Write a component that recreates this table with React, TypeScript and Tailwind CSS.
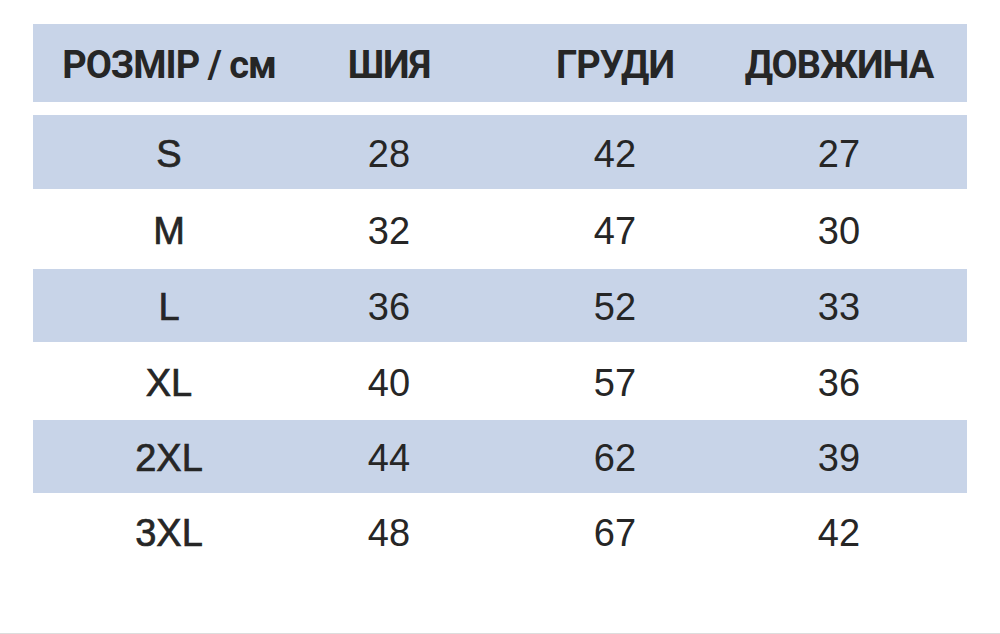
import React from 'react';

// Size chart: header + six size rows, every other row tinted
const rows = [
    { size: 'S', neck: 28, chest: 42, length: 27, h: 'h-[74px]', tint: true },
    { size: 'M', neck: 32, chest: 47, length: 30, h: 'h-[80px]', tint: false },
    { size: 'L', neck: 36, chest: 52, length: 33, h: 'h-[73px]', tint: true },
    { size: 'XL', neck: 40, chest: 57, length: 36, h: 'h-[78px]', tint: false },
    { size: '2XL', neck: 44, chest: 62, length: 39, h: 'h-[73px]', tint: true },
    { size: '3XL', neck: 48, chest: 67, length: 42, h: 'h-[76px]', tint: false },
];

const cols = 'grid grid-cols-[220px_220px_232px_216px] pl-[26px] items-center';

export default function App() {
    return (
        <div className="w-[1000px] h-[634px] bg-white border-b border-[#dddddd] text-[#262626] font-['Roboto',sans-serif] overflow-hidden">
            <div className="pt-[24px] px-[33px]">
                {/* Header */}
                <div className={`${cols} h-[78px] bg-[#c8d4e8] pt-[3px] text-[38px] font-bold leading-none whitespace-nowrap tracking-[-1px]`}>
                    <div className="text-center">РОЗМІР / см</div>
                    <div className="text-center">ШИЯ</div>
                    <div className="text-center">ГРУДИ</div>
                    <div className="text-center">ДОВЖИНА</div>
                </div>

                {/* Body */}
                <div className="mt-[13px]">
                    {rows.map((r) => (
                        <div
                            key={r.size}
                            className={`${cols} ${r.h} ${r.tint ? 'bg-[#c8d4e8]' : 'bg-white'} pt-[3px] text-[38px] leading-none font-['Liberation_Sans',Arial,sans-serif]`}
                        >
                            <div className="text-center [-webkit-text-stroke:0.7px_#262626]">{r.size}</div>
                            <div className="text-center">{r.neck}</div>
                            <div className="text-center">{r.chest}</div>
                            <div className="text-center">{r.length}</div>
                        </div>
                    ))}
                </div>
            </div>
        </div>
    );
}
